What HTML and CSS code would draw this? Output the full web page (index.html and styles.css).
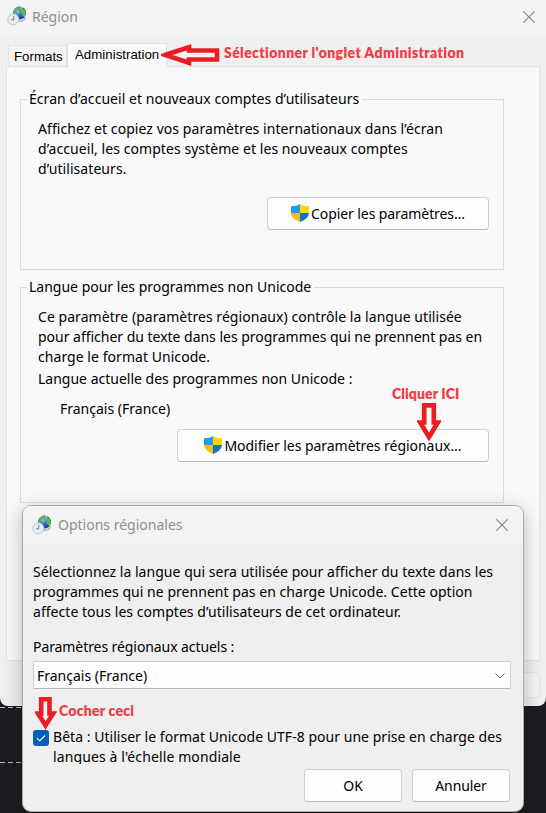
FILE: index.html
```
<!DOCTYPE html>
<html lang="fr">
<head>
<meta charset="utf-8">
<title>Région</title>
<link rel="stylesheet" href="styles.css">
</head>
<body>
<svg class="defs" width="0" height="0" aria-hidden="true">
  <defs>
    <radialGradient id="sea" cx=".35" cy=".35" r=".75"><stop offset="0" stop-color="#86c4f8"/><stop offset=".5" stop-color="#2a66d4"/><stop offset="1" stop-color="#12327e"/></radialGradient>
    <symbol id="globe" viewBox="0 0 20 20">
      <path d="M11 15q6 1 7.500-4" fill="none" stroke="#b5bfcc" stroke-width="2"/>
      <circle cx="12.500" cy="7" r="6.500" fill="url(#sea)"/>
      <path d="M7 4Q9 .8 12.500 .6L12 3 10 4.500 9.500 7 7.500 7.500ZM15 2l3 2.500 1 3-1.500 3.500-2-1-1-3-1.500-2z" fill="#63b83b"/>
      <path d="M13.500 .8l2 .7-1 1.500-2-.7z" fill="#a9dc86"/>
      <circle cx="6.300" cy="13.300" r="5.500" fill="#e8edf1" stroke="#bcc5cc" stroke-width="1"/>
      <path d="M6.800 9.800v4H4" fill="none" stroke="#6d7d8e" stroke-width="1"/>
    </symbol>
    <symbol id="shield" viewBox="0 0 18 18">
      <path d="M9 0Q6 2.200 0 2.200V9h9z" fill="#1f9fe0"/>
      <path d="M9 0q3 2.200 9 2.200V9H9z" fill="#ffd60a"/>
      <path d="M0 9q.5 6 9 9V9z" fill="#f9bd0b"/>
      <path d="M18 9q-.5 6-9 9V9z" fill="#0f73c9"/>
    </symbol>
    <symbol id="close" viewBox="0 0 12 12"><path d="M.3 .3l11.400 11.400M11.700 .3L.3 11.700" fill="none" stroke="#858585" stroke-width="1.100"/></symbol>
  </defs>
</svg>
<main class="desktop">
  <section class="window">
    <header class="titlebar">
      <svg class="app-icon"><use href="#globe"/></svg>
      <h1>Région</h1>
      <svg class="close"><use href="#close"/></svg>
    </header>
    <nav class="tabs">
      <span class="tab">Formats</span>
      <span class="tab active">Administration</span>
    </nav>
    <div class="panel">
      <fieldset class="group welcome">
        <legend>Écran d’accueil et nouveaux comptes d’utilisateurs</legend>
        <p>Affichez et copiez vos paramètres internationaux dans l’écran<br>d’accueil, les comptes système et les nouveaux comptes<br>d’utilisateurs.</p>
        <button class="button copy"><svg class="shield"><use href="#shield"/></svg><span>Copier les paramètres...</span></button>
      </fieldset>
      <fieldset class="group language">
        <legend>Langue pour les programmes non Unicode</legend>
        <p><span class="wide">Ce paramètre (paramètres régionaux) contrôle la langue utilisée</span><br><span class="tight">pour afficher du texte dans les programmes qui ne prennent pas en</span><br><span class="wide">charge le format Unicode.</span></p>
        <p class="current">Langue actuelle des programmes non Unicode :</p>
        <p class="locale">Français (France)</p>
        <button class="button modify"><svg class="shield"><use href="#shield"/></svg><span>Modifier les paramètres régionaux...</span></button>
      </fieldset>
    </div>
    <div class="footer"><span class="button apply"></span></div>
  </section>
  <div class="backdrop"><i class="dash"></i><i class="dash second"></i></div>

  <section class="dialog">
    <header class="dialog-title">
      <svg class="app-icon"><use href="#globe"/></svg>
      <h2>Options régionales</h2>
      <svg class="close"><use href="#close"/></svg>
    </header>
    <div class="dialog-body">
      <p class="intro">Sélectionnez la langue qui sera utilisée pour afficher du texte dans les<br>programmes qui ne prennent pas en charge Unicode. Cette option<br>affecte tous les comptes d’utilisateurs de cet ordinateur.</p>
      <p class="label">Paramètres régionaux actuels :</p>
      <div class="select"><span>Français (France)</span><svg width="10" height="6" viewBox="0 0 10 6"><path d="M.5 .5L5 5 9.500 .5" fill="none" stroke="#606060" stroke-width="1"/></svg></div>
      <div class="check-row">
        <span class="checkbox"><svg width="16" height="16" viewBox="0 0 16 16"><path d="M4 8.200l2.700 2.600L12 5.500" fill="none" stroke="#fff" stroke-width="1.100"/></svg></span>
        <p>Bêta : Utiliser le format Unicode UTF-8 pour une prise en charge des<br><span class="clipped">langues à l'échelle mondiale</span></p>
      </div>
      <div class="actions"><button class="button">OK</button><button class="button">Annuler</button></div>
    </div>
  </section>

  <span class="note note-tab">Sélectionner l'onglet Administration</span>
  <svg class="arrow arrow-tab" viewBox="0 0 60 22"><path d="M4 11L28 3.200V6.500H56V15.500H28V18.800z" fill="#f3f3f3" stroke="#ed1c24" stroke-width="4.600"/></svg>
  <span class="note note-click">Cliquer ICI</span>
  <svg class="arrow arrow-click" viewBox="0 0 24 38"><path d="M7.200 2.300h9.600V19.500h4L12 34 3.200 19.500h4z" fill="#fcfcfc" stroke="#ed1c24" stroke-width="4.700"/></svg>
  <span class="note note-check">Cocher ceci</span>
  <svg class="arrow arrow-check" viewBox="0 0 22 33"><path d="M6.200 2.300h8.300V16.500h3.700L10.500 28.500 3 16.500h3.200z" fill="#f3f3f3" stroke="#ed1c24" stroke-width="4.600"/></svg>
</main>
</body>
</html>
```
FILE: styles.css
```
* { box-sizing: border-box; }
body { margin: 0; background: #1c1d21; color: #000; font: 14px/20px "Noto Sans", sans-serif; }
p, h1, h2 { margin: 0; font-size: 14px; font-weight: 400; white-space: nowrap; }
svg { display: block; flex: none; }
.defs { position: absolute; }
.desktop { position: relative; width: 546px; height: 813px; overflow: hidden; }

.window { height: 706px; background: #efefef; border-radius: 0 0 8px 8px; display: flex; flex-direction: column; }
.titlebar { height: 35px; flex: none; background: #f3f3f3; display: flex; align-items: center; padding: 0 10px 3px 7px; color: #8f8f8f; }
.titlebar h1 { flex: 1; margin-left: 5px; padding-top: 2px; }
.app-icon { width: 20px; height: 20px; }
.close { width: 12px; height: 12px; }
.titlebar .close { margin: 2px 1px 0 0; }

.tabs { height: 31px; flex: none; display: flex; align-items: flex-end; padding-left: 8px; font: 13.3px/20px "Liberation Sans", Arial, sans-serif; }
.tab { width: 59px; height: 21px; padding-left: 5px; background: #f3f3f3; border: 1px solid #e2e2e2; border-bottom: 0; line-height: 22px; white-space: nowrap; }
.tab.active { width: 100px; height: 24px; padding-left: 7px; background: #f9f9f9; line-height: 21px; position: relative; margin-bottom: -1px; }

.panel { height: 595px; flex: none; width: 534px; margin-left: 6px; border: 1px solid #e2e2e2; background: #f9f9f9; padding: 23px 13px 0; }
.group { display: flex; flex-direction: column; align-items: flex-start; width: 484px; margin: 0; padding: 0 14px 0 17px; border: 1px solid #dcdcdc; }
.group legend { margin-left: -11px; padding: 0 3px 0 2px; height: 18px; line-height: 18px; }
.welcome { height: 180px; padding-top: 11px; letter-spacing: .04px; }
.language { height: 225px; margin-top: 8px; padding-top: 11px; }
.welcome p { letter-spacing: .06px; }
.wide { letter-spacing: .05px; }
.tight { letter-spacing: -.02px; }
.button { display: flex; align-items: center; justify-content: center; height: 33px; padding: 0; border: 1px solid #d0d0d0; border-bottom-color: #bababa; border-radius: 4px; background: #fdfdfd; color: #000; font: 14px/20px "Noto Sans", sans-serif; white-space: nowrap; }
.shield { width: 18px; height: 18px; margin: 0 2px 2px 0; }
.copy { width: 222px; align-self: flex-end; margin-top: 18px; letter-spacing: -.08px; }
.modify { width: 312px; align-self: flex-end; margin-top: 10px; letter-spacing: -.04px; }
.current { margin-top: 2px; }
.locale { margin: 10px 0 0 22px; }
.footer { display: flex; justify-content: flex-end; padding: 11px 6px 0; }
.apply { width: 90px; height: 26px; background: #f4f4f4; border-color: #e4e4e4; }

.backdrop { height: 107px; }
.dash { display: block; height: 1px; width: 22px; margin-top: 1px; background: repeating-linear-gradient(90deg, #bbb 0 5px, transparent 5px 8px); }
.dash.second { margin-top: 54px; }

.dialog { position: absolute; left: 22px; top: 505px; width: 502px; height: 307px; border: 1px solid #aaa; border-radius: 9px; background: #efefef; overflow: hidden; box-shadow: 0 4px 18px rgba(0, 0, 0, .25); }
.dialog-title { display: flex; align-items: center; height: 37px; padding: 0 15px 0 9px; background: #f3f3f3; color: #8f8f8f; }
.dialog-title h2 { flex: 1; margin-left: 6px; }
.dialog-body { padding: 19px 13px 0 10px; }
.intro { letter-spacing: .04px; }
.label { margin-top: 15px; letter-spacing: -.08px; }
.select { display: flex; align-items: center; justify-content: space-between; width: 478px; height: 28px; margin-top: 4px; padding: 1px 5px 0 3px; border: 1px solid #d0d0d0; border-bottom-color: #b8b8b8; background: #fdfdfd; border-radius: 1px; }
.check-row { display: flex; height: 38px; margin-top: 38px; letter-spacing: .03px; }
.check-row p { margin-left: 4px; }
.checkbox { width: 16px; height: 16px; margin-top: 3px; border-radius: 3px; background: #0560b8; }
.clipped { display: inline-block; height: 17px; overflow: hidden; vertical-align: top; letter-spacing: .11px; }
.actions { display: flex; justify-content: flex-end; gap: 10px; margin-top: 4px; }
.actions .button { width: 98px; letter-spacing: -.1px; }

.note { position: absolute; color: #ef3e46; font: 800 14px/18px Lato, sans-serif; white-space: nowrap; }
.note-tab { left: 224px; top: 44px; letter-spacing: .4px; }
.note-click { left: 392px; top: 385px; letter-spacing: .1px; }
.note-check { left: 59px; top: 702px; letter-spacing: .25px; }
.arrow { position: absolute; }
.arrow-tab { left: 161px; top: 44px; width: 60px; height: 22px; }
.arrow-click { left: 417px; top: 403px; width: 24px; height: 38px; }
.arrow-check { left: 35px; top: 697px; width: 22px; height: 33px; }
```
